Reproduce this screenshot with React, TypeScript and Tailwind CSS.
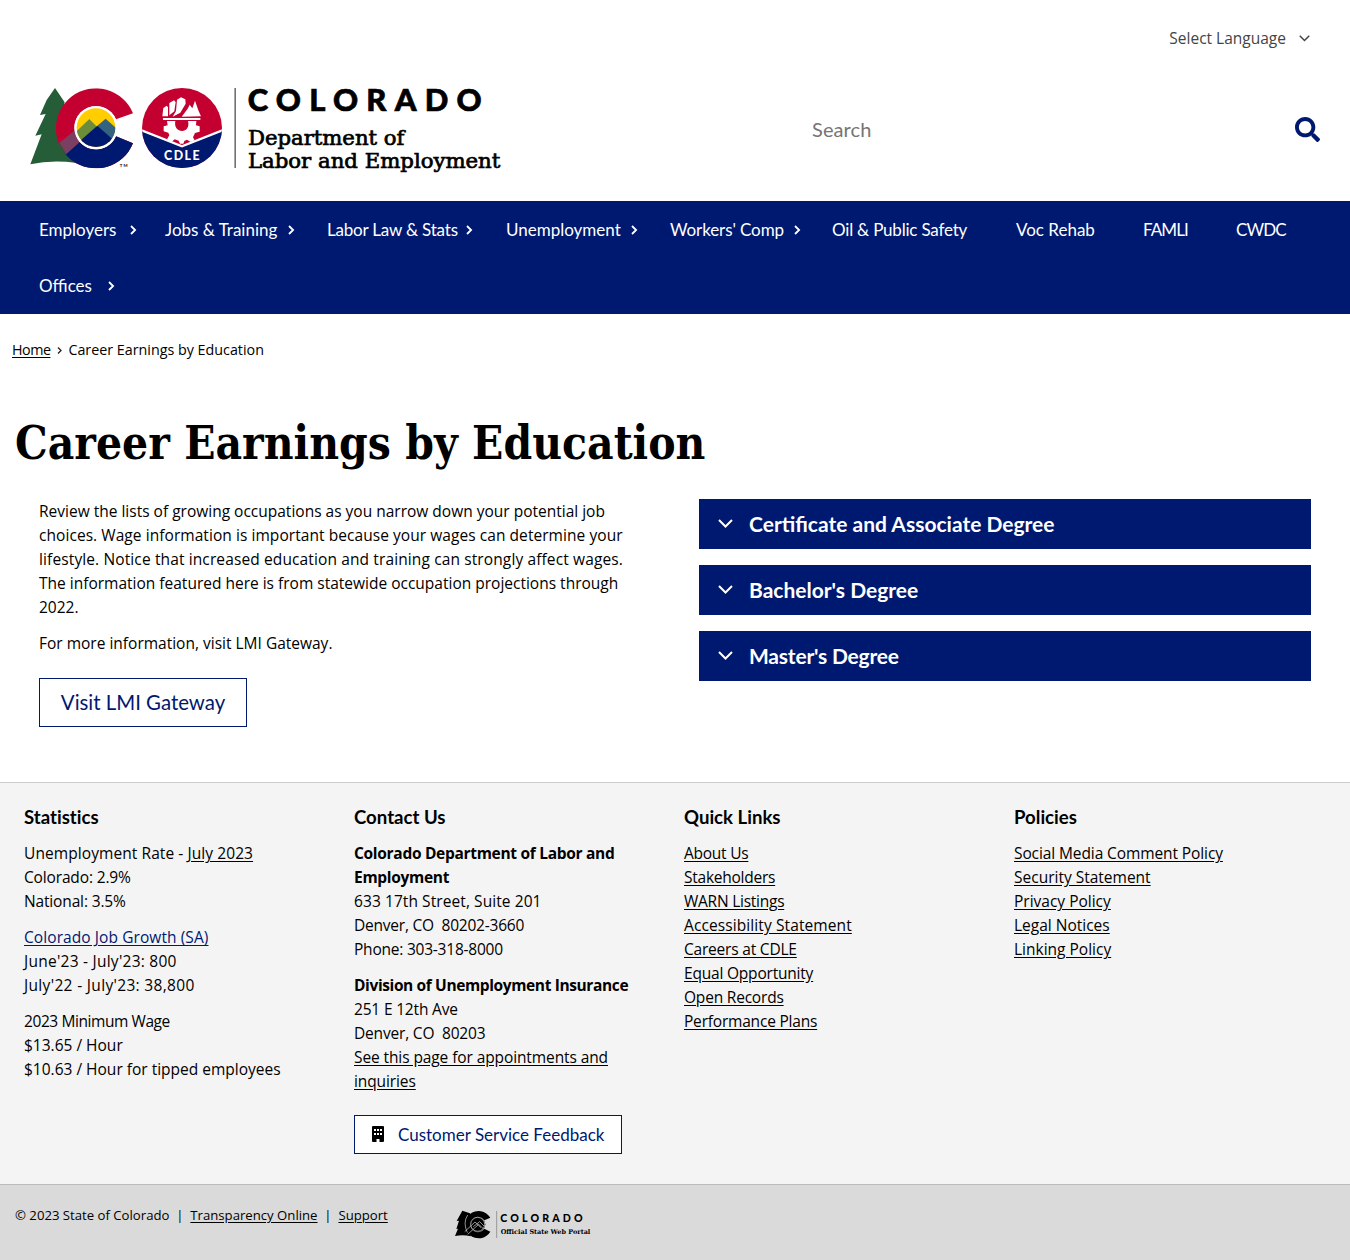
import type { ReactNode } from "react";

const heading = "font-['Lato'] font-bold text-[18.6px] leading-6 [font-variant-ligatures:none]";

function Chevron({ className = "" }: { className?: string }) {
  return (
    <svg className={className} width="8" height="10" viewBox="0 0 8 10" fill="none" stroke="currentColor" strokeWidth="1.8">
      <path d="M1 1 L5.100 5 L1 9" />
    </svg>
  );
}

function Down({ size, stroke }: { size: number; stroke: number }) {
  return (
    <svg width={size} height={size * 0.6} viewBox="0 0 15 9" fill="none" stroke="currentColor" strokeWidth={stroke}>
      <path d="M1 1 L7.5 7.5 L14 1" />
    </svg>
  );
}

function Logo() {
  return (
    <svg width="500" height="105" viewBox="0 0 1500 315" className="block" role="img" aria-label="Colorado Department of Labor and Employment">
      <defs>
        <clipPath id="c-shape">
          <path d="M339 115 A120 120 0 1 0 339 205 L288 184 A65 65 0 1 1 288 133 Z" />
        </clipPath>
        <clipPath id="sun"><circle cx="228" cy="158" r="58" /></clipPath>
        <clipPath id="seal"><circle cx="486" cy="159" r="120" /></clipPath>
      </defs>
      <path fill="#245d38" d="M105 39 L80 75 L60 120 L77 117 L46 182 L65 178 L31 268 Q95 254 170 264 L190 240 L120 140 L134 82 Z" />
      <g clipPath="url(#c-shape)">
        <rect x="100" y="30" width="250" height="260" fill="#c3002f" />
        <path fill="#245d38" d="M100 217 L118 203 L142 236 L120 260Z" />
        <path fill="#7a3f62" d="M118 203 L166 165 L195 194 L140 238Z" />
        <path fill="#001970" d="M136 240 L192 190 L240 200 L290 150 L360 190 L350 290 L160 290Z" />
      </g>
      <circle cx="228" cy="158" r="65" fill="#fff" />
      <g clipPath="url(#sun)">
        <rect x="165" y="95" width="130" height="130" fill="#ffcd00" />
        <path fill="#6d8c3a" d="M160 178 L208 132 L250 175 L190 225Z" />
        <path fill="#35637f" d="M232 152 L257 131 L295 165 L280 220Z" />
        <path fill="#001970" d="M172 205 L232 152 L295 208 L280 230 L180 230Z" />
      </g>
      <text x="299" y="277" fontFamily="Lato" fontWeight="700" fontSize="13" textLength="24">TM</text>

      <g clipPath="url(#seal)">
        <rect x="366" y="39" width="240" height="240" fill="#c3002f" />
        <path d="M350 160 L486 214 L622 160 V290 H350Z" fill="#001970" stroke="#fff" strokeWidth="7" />
      </g>
      <g fill="#fff">
        <path d="M427 124 L430 99 L440 92 L444 97 V124Z M448 121 V84 L462 76 L467 81 L463 109Z M468 108 L471 74 L483 67 L496 73 L497 86 L481 113 L458 125Z M485 125 L503 101 L509 89 L517 100 L525 77 L535 106 L543 124Z" />
        <path d="M429 129 H541 V135 H429Z" />
        <path fillRule="evenodd" d="M441 138 H529 L528 151 L539 154 V170 L525 174 L519 187 L524 196 L512 201 L501 194 L493 198 L490 206 L480 206 L476 197 L464 193 L454 202 L441 193 L448 181 L445 173 L431 169 V154 L443 151Z M466 138 C462 158 474 168 486 168 C499 168 509 156 504 138Z" />
      </g>
      <text x="432" y="255" fill="#fff" fontFamily="Lato" fontWeight="900" fontSize="37" textLength="107">CDLE</text>
      <path d="M645.5 39 V279" stroke="#555" strokeWidth="4" />
      <text x="683" y="107" fontFamily="Lato" fontWeight="900" fontSize="93" stroke="#000" strokeWidth="2" textLength="702">COLORADO</text>
      <g fontFamily="DejaVu Serif" fontSize="60" stroke="#000" strokeWidth="2">
        <text x="684" y="210" textLength="469" lengthAdjust="spacingAndGlyphs">Department of</text>
        <text x="684" y="279" textLength="757" lengthAdjust="spacingAndGlyphs">Labor and Employment</text>
      </g>
    </svg>
  );
}

function PortalLogo() {
  return (
    <svg width="170" height="80" viewBox="0 0 510 240" className="block" role="img" aria-label="Colorado Official State Web Portal">
      <path d="M67 92 L50 123 L57 122 L49 147 L54 146 L45 168 Q70 163 92 169 L90 100Z" />
      <path d="M151 113 A41 41 0 1 0 151 155 L133 146 A23 23 0 1 1 133 121Z" />
      <circle cx="113" cy="133" r="23" />
      <circle cx="113" cy="133" r="21" fill="none" stroke="#dadada" strokeWidth="2.2" />
      <path d="M74 155 L105 126 L123 143 M100 140 L119 125 L133 139 M83 163 L116 133 L130 146 M83 105 Q68 128 82 158" fill="none" stroke="#dadada" strokeWidth="2" />
      <path d="M170 93 V174" stroke="#777" strokeWidth="2" />
      <text x="181" y="126" fontFamily="Lato" fontWeight="900" fontSize="32" textLength="247">COLORADO</text>
      <text x="182" y="162" fontFamily="DejaVu Serif" fontWeight="700" fontSize="20" textLength="269" lengthAdjust="spacingAndGlyphs">Official State Web Portal</text>
    </svg>
  );
}

function NavItem({ label, box, text, track = "" }: { label: string; box: string; text?: string; track?: string }) {
  return (
    <a className={`flex h-14 items-center ${box}`}>
      <span className={`mt-px whitespace-nowrap ${track} ${text ?? ""}`}>{label}</span>
      {text && <Chevron className="mt-0.5" />}
    </a>
  );
}

function Panel({ title, track }: { title: string; track: string }) {
  return (
    <div className="flex h-[50px] items-center bg-[#001970] pl-[19px] text-white">
      <Down size={15} stroke={2} />
      <span className={`ml-4 pt-px font-['Lato'] text-[21px] font-bold ${track}`}>{title}</span>
    </div>
  );
}

function Column({ title, children }: { title: string; children: ReactNode }) {
  return (
    <section className="w-[330px] pl-6 pr-6">
      <h2 className={`${heading} mb-3`}>{title}</h2>
      {children}
    </section>
  );
}

const U = ({ children }: { children: ReactNode }) => <a className="underline underline-offset-2">{children}</a>;

export default function App() {
  return (
    <div className="h-[1260px] w-[1350px] overflow-hidden bg-white font-['Open_Sans'] text-[15.5px] leading-6 text-black">
      <header className="h-[201px]">
        <div className="flex h-[75px] items-center justify-end pr-10 text-[#444]">
          <span className="mr-[13px]">Select Language</span>
          <span className="pt-0.5"><Down size={11} stroke={2} /></span>
        </div>
        <div className="flex h-[105px] pl-5">
          <Logo />
          <div className="ml-[292px] flex flex-1 items-center justify-between pr-[30px] pt-[3px]">
            <span className="font-['Lato'] text-[20px] tracking-[0.1px] text-[#757575]">Search</span>
            <svg width="25" height="25" viewBox="0 0 512 512" fill="#001970">
              <path d="M505 442.7L405.3 343c-4.500-4.500-10.600-7-17-7H372c27.600-35.300 44-79.700 44-128C416 93.100 322.900 0 208 0S0 93.100 0 208s93.100 208 208 208c48.300 0 92.700-16.400 128-44v16.300c0 6.400 2.500 12.500 7 17l99.700 99.700c9.400 9.400 24.600 9.400 33.900 0l28.300-28.300c9.400-9.400 9.400-24.600.1-34zM208 336c-70.700 0-128-57.200-128-128 0-70.700 57.200-128 128-128 70.700 0 128 57.200 128 128 0 70.700-57.200 128-128 128z" />
            </svg>
          </div>
        </div>
      </header>

      <nav className="flex h-[113px] flex-wrap content-start bg-[#001970] pl-[39px] font-['Lato'] text-[17px] text-white">
        <NavItem label="Employers" box="w-[126px]" text="w-[91px]" />
        <NavItem label="Jobs & Training" box="w-[162px]" text="w-[123px]" />
        <NavItem label="Labor Law & Stats" box="w-[179px]" text="w-[139px]" track="tracking-[-0.2px]" />
        <NavItem label="Unemployment" box="w-[164px]" text="w-[125px]" />
        <NavItem label="Workers' Comp" box="w-[162px]" text="w-[124px]" track="tracking-[-0.1px]" />
        <NavItem label="Oil & Public Safety" box="w-[184px]" track="tracking-[-0.2px]" />
        <NavItem label="Voc Rehab" box="w-[127px]" />
        <NavItem label="FAMLI" box="w-[93px]" track="tracking-[-0.9px]" />
        <NavItem label="CWDC" box="w-[114px]" track="tracking-[-0.9px]" />
        <NavItem label="Offices" box="w-[126px]" text="w-[69px]" />
      </nav>

      <main className="h-[468px]">
        <div className="flex items-center pl-3 pt-6 text-[14.3px]">
          <span className="tracking-[-0.5px]"><U>Home</U></span>
          <svg width="5" height="7" viewBox="0 0 5 7" fill="none" stroke="#222" strokeWidth="1.3" className="ml-[7px] mr-1.5"><path d="M1 .5 L4 3.500 L1 6.500" /></svg>
          <span>Career Earnings by Education</span>
        </div>
        <h1 className="ml-[15px] mt-[51px] inline-block origin-left scale-x-[0.893] whitespace-nowrap font-['DejaVu_Serif'] text-[46px] font-bold leading-[60px]">
          Career Earnings by Education
        </h1>
        <div className="mt-[25.5px] flex">
          <div className="w-[699px] pl-[39px]">
            <p>
              Review the lists of growing occupations as you narrow down your potential job<br />
              <span className="tracking-[0.06px]">choices. Wage information is important because your wages can determine your</span><br />
              <span className="tracking-[0.12px]">lifestyle. Notice that increased education and training can strongly affect wages.</span><br />
              The information featured here is from statewide occupation projections through<br />
              2022.
            </p>
            <p className="mt-3">For more information, visit LMI Gateway.</p>
            <a className="mt-[23px] flex h-[49px] w-[208px] items-center justify-center border border-[#001970] font-['Lato'] text-[20.4px] text-[#001970]">
              Visit LMI Gateway
            </a>
          </div>
          <div className="flex w-[612px] flex-col gap-4">
            <Panel title="Certificate and Associate Degree" track="tracking-normal" />
            <Panel title="Bachelor's Degree" track="tracking-normal" />
            <Panel title="Master's Degree" track="tracking-[-0.2px]" />
          </div>
        </div>
      </main>

      <div className="flex h-[402px] border-t border-[#ccc] bg-[#f4f4f4] pt-[22px]">
        <Column title="Statistics">
          <p><span className="tracking-[0.08px]">Unemployment Rate - <U>July 2023</U></span><br /><span className="tracking-[-0.15px]">Colorado: 2.9%<br />National: 3.5%</span></p>
          <p className="mt-3"><span className="tracking-[0.08px] text-[#001970]"><U>Colorado Job Growth (SA)</U></span><br /><span className="tracking-[0.25px]">June'23 - July'23: 800</span><br /><span className="tracking-[0.33px]">July'22 - July'23: 38,800</span></p>
          <p className="mt-3 whitespace-nowrap"><span className="tracking-[-0.42px]">2023 Minimum Wage</span><br />$13.65 / Hour<br />$10.63 / Hour for tipped employees</p>
        </Column>
        <Column title="Contact Us">
          <p className="whitespace-nowrap"><b className="tracking-[-0.3px]">Colorado Department of Labor and<br />Employment</b><br /><span className="tracking-[0.08px]">633 17th Street, Suite 201</span><br /><span className="tracking-[-0.22px]">Denver, CO&nbsp; 80202-3660<br />Phone: 303-318-8000</span></p>
          <p className="mt-3 whitespace-nowrap"><b className="tracking-[-0.38px]">Division of Unemployment Insurance</b><br /><span className="tracking-[-0.18px]">251 E 12th Ave<br />Denver, CO&nbsp; 80203</span><br /><span className="tracking-[-0.1px]"><U>See this page for appointments and<br />inquiries</U></span></p>
          <a className="mt-[22px] flex h-[38.5px] w-[268px] items-center border border-[#001970] bg-white pl-[17px] font-['Lato'] text-[17px] text-[#001970]">
            <svg width="12" height="16" viewBox="0 0 12 16" className="mr-[14px]">
              <path fill="#000" fillRule="evenodd" d="M1 0H11Q12 0 12 1V15Q12 16 11 16H7.500V13H4.500V16H1Q0 16 0 15V1Q0 0 1 0Z M2 3V5H4V3Z M5 3V5H7V3Z M8 3V5H10V3Z M2 7V9H4V7Z M5 7V9H7V7Z M8 7V9H10V7Z" />
            </svg>
            <span className="whitespace-nowrap pt-px">Customer Service Feedback</span>
          </a>
        </Column>
        <Column title="Quick Links">
          <div className="tracking-[-0.25px]"><U>About Us</U><br /><U>Stakeholders</U><br /><U>WARN Listings</U></div>
          <div className="tracking-[0.1px]"><U>Accessibility Statement</U></div>
          <div className="tracking-[-0.2px]"><U>Careers at CDLE</U><br /><U>Equal Opportunity</U><br /><U>Open Records</U><br /><U>Performance Plans</U></div>
        </Column>
        <Column title="Policies">
          <span className="tracking-[-0.1px]"><U>Social Media Comment Policy</U></span><br /><U>Security Statement</U><br /><U>Privacy Policy</U><br /><U>Legal Notices</U><br /><U>Linking Policy</U>
        </Column>
      </div>

      <footer className="flex h-[76px] border-t border-[#bbb] bg-[#dadada]">
        <div className="w-[440px] whitespace-nowrap pl-[15px] pt-[18px] text-[13.17px]">
          © 2023 State of Colorado&nbsp; |&nbsp; <U>Transparency Online</U>&nbsp; |&nbsp; <U>Support</U>
        </div>
        <div className="-mt-[5px]"><PortalLogo /></div>
      </footer>
    </div>
  );
}
